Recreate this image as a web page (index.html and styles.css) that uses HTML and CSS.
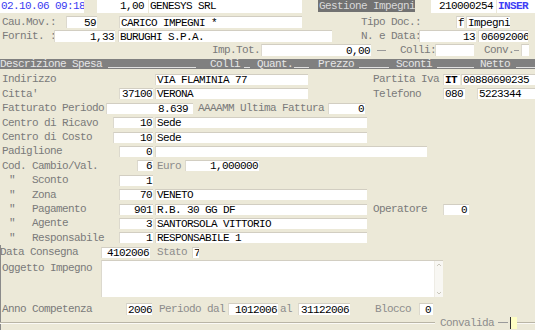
FILE: index.html
```html
<!DOCTYPE html>
<html>
<head>
<meta charset="utf-8">
<link rel="stylesheet" href="styles.css">
</head>
<body>
<div class="screen">
  <div class="trow t1">
    <div class="fld date w84">02.10.06 09:18</div>
    <div class="fld r pr4 w51 ml13">1,00</div>
    <div class="fld w153 ml1">GENESYS SRL</div>
    <div class="title w97 ml16">Gestione Impegni</div>
    <div class="fld r pr3 w65 ml16">210000254</div>
    <div class="fld mode w38 ml1">INSER</div>
  </div>
  <div class="trow">
    <div class="lbl w66">Cau.Mov.:</div>
    <div class="fld r w31">59</div>
    <div class="fld w183 ml22">CARICO IMPEGNI *</div>
    <div class="lbl nopad w95 ml59">Tipo Doc.:</div>
    <div class="fld w8">f</div>
    <div class="fld w44 ml2">Impegni</div>
  </div>
  <div class="trow">
    <div class="lbl w54">Fornit. :</div>
    <div class="fld r w61">1,33</div>
    <div class="fld w214 ml3">BURUGHI S.P.A.</div>
    <div class="lbl nopad w58 ml29">N. e Data:</div>
    <div class="fld r w57">13</div>
    <div class="fld pl2 w50 ml2">06092006</div>
  </div>
  <div class="trow">
    <div class="lbl w51 ml210">Imp.Tot.:</div>
    <div class="fld r w110">0,00</div>
    <div class="dash w9 ml6"></div>
    <div class="lbl nopad w35 ml14">Colli:</div>
    <div class="fld w39">&nbsp;</div>
    <div class="lbl nopad w29 ml10">Conv.</div>
    <div class="dash w5 ml1"></div>
    <div class="fld w8 ml2">&nbsp;</div>
  </div>

  <div class="hbar">
    <span class="htxt w108">Descrizione Spesa</span>
    <span class="uline w88"></span>
    <span class="htxt w30 ml14">Colli</span>
    <span class="uline w6 ml4"></span>
    <span class="htxt w36 ml7">Quant.</span>
    <span class="uline w15 ml1"></span>
    <span class="htxt w36 ml9">Prezzo</span>
    <span class="uline w30 ml5"></span>
    <span class="htxt w36 ml7">Sconti</span>
    <span class="uline w37 ml5"></span>
    <span class="htxt w30 ml6">Netto</span>
    <span class="uline grow ml6"></span>
  </div>

  <div class="body">
    <div class="frow">
      <div class="c1"><span class="lbl">Indirizzo</span></div>
      <div class="c2"><div class="fld w153">VIA FLAMINIA 77</div></div>
      <div class="c3 lbl">Partita Iva</div>
      <div class="c4"><div class="fld bold w17">IT</div><div class="fld w74 ml1">00880690235</div></div>
    </div>
    <div class="frow">
      <div class="c1"><span class="lbl">Citta'</span><div class="fld r w34">37100</div></div>
      <div class="c2"><div class="fld w153">VERONA</div></div>
      <div class="c3 lbl">Telefono</div>
      <div class="c4"><div class="fld w22">080</div><div class="fld w58 ml12">5223344</div></div>
    </div>
    <div class="frow">
      <div class="lbl w106">Fatturato Periodo</div>
      <div class="fld r pr5 w87">8.639</div>
      <div class="lbl w132 ml3">AAAAMM Ultima Fattura</div>
      <div class="fld r w37">0</div>
    </div>
    <div class="frow">
      <div class="c1"><span class="lbl">Centro di Ricavo</span><div class="fld r w40">10</div></div>
      <div class="c2"><div class="fld w212">Sede</div></div>
    </div>
    <div class="frow">
      <div class="c1"><span class="lbl">Centro di Costo</span><div class="fld r w40">10</div></div>
      <div class="c2"><div class="fld w212">Sede</div></div>
    </div>
    <div class="frow">
      <div class="c1"><span class="lbl">Padiglione</span><div class="fld r w34">0</div></div>
      <div class="c2"><div class="fld w272">&nbsp;</div></div>
    </div>
    <div class="frow">
      <div class="c1"><span class="lbl">Cod. Cambio/Val.</span><div class="fld r w16">6</div></div>
      <div class="c2"><span class="lbl lite w30">Euro</span><div class="fld r w74">1,000000</div></div>
    </div>
    <div class="frow">
      <div class="c1"><span class="lbl"><span class="q">"</span>Sconto</span><div class="fld r w34">1</div></div>
    </div>
    <div class="frow">
      <div class="c1"><span class="lbl"><span class="q">"</span>Zona</span><div class="fld r w34">70</div></div>
      <div class="c2"><div class="fld w212">VENETO</div></div>
    </div>
    <div class="frow">
      <div class="c1"><span class="lbl"><span class="q">"</span>Pagamento</span><div class="fld r w34">901</div></div>
      <div class="c2"><div class="fld w212">R.B. 30 GG DF</div></div>
      <div class="c3 lbl">Operatore</div>
      <div class="c4"><div class="fld r pr2 w26">0</div></div>
    </div>
    <div class="frow">
      <div class="c1"><span class="lbl"><span class="q">"</span>Agente</span><div class="fld r w34">3</div></div>
      <div class="c2"><div class="fld w212">SANTORSOLA VITTORIO</div></div>
    </div>
    <div class="frow">
      <div class="c1"><span class="lbl"><span class="q">"</span>Responsabile</span><div class="fld r w34">1</div></div>
      <div class="c2"><div class="fld w212">RESPONSABILE 1</div></div>
    </div>
    <div class="lower">
      <div class="frow">
        <div class="c1"><span class="lbl nopad">Data Consegna</span><div class="fld r w49 mr3">4102006</div></div>
        <div class="c2"><span class="lbl lite w37">Stato</span><div class="fld w7">7</div></div>
      </div>
      <div class="orow">
        <div class="lbl otl w101">Oggetto Impegno</div>
        <div class="tarea">
          <div class="sbar">
            <div class="sbtn"><svg width="8" height="8" viewBox="0 0 8 8"><path d="M2 5 L4 3 L6 5" fill="none" stroke="#c9c6bb" stroke-width="1"/></svg></div>
            <div class="strack"></div>
            <div class="sbtn"><svg width="8" height="8" viewBox="0 0 8 8"><path d="M2 3 L4 5 L6 3" fill="none" stroke="#c9c6bb" stroke-width="1"/></svg></div>
          </div>
        </div>
      </div>
      <div class="frow arow">
        <div class="c1"><span class="lbl">Anno Competenza</span><div class="fld h12 r w26 mr1">2006</div></div>
        <div class="lbl lite w71 ml4">Periodo dal</div>
        <div class="fld h12 r w50">1012006</div>
        <div class="lbl lite w20 pl2">al</div>
        <div class="fld h12 pl2 w52">31122006</div>
        <div class="lbl lite w46 ml23">Blocco</div>
        <div class="fld h12 r pr2 w14">0</div>
      </div>
      <div class="brow">
        <div class="groove w435"></div>
        <div class="lbl lite ml3 w54">Convalida</div>
        <div class="dash w10 ml6"></div>
        <div class="ybox ml2"></div>
        <div class="groove grow"></div>
      </div>
    </div>
  </div>
</div>
</body>
</html>
```

FILE: styles.css
```css
html, body {
  margin: 0;
  padding: 0;
  background: #ECE9D8;
}
.screen {
  width: 535px;
  height: 330px;
  overflow: hidden;
  background: #ECE9D8;
  font-family: "Liberation Mono", "Courier New", monospace;
  font-size: 11px;
  letter-spacing: -0.6px;
  color: #000;
}
.trow {
  display: flex;
  align-items: center;
  height: 14px;
}
.trow.t1 {
  height: 15px;
  align-items: flex-start;
}
.trow .fld { height: 12px; line-height: 12px; }
.t1 .fld { height: 13px; line-height: 13px; }

.fld {
  background: #fff;
  height: 11px;
  line-height: 11px;
  box-sizing: border-box;
  border-top: 1px solid #d2cec2;
  border-left: 1px solid #dcd9ce;
  padding: 0 1px;
  white-space: nowrap;
  overflow: hidden;
  flex: none;
}
.fld.h12 { height: 12px; line-height: 12px; }
.t1 .fld { border: none; }
.r { text-align: right; }
.bold { font-weight: bold; }
.date { color: #3a3af2; padding-left: 1px; }
.mode { color: #3f3ff5; font-weight: bold; padding-left: 1px; }
.title {
  background: #727272;
  color: #d9d9d9;
  height: 12px;
  line-height: 12px;
  padding-left: 1px;
  box-sizing: border-box;
  white-space: nowrap;
  flex: none;
}
.lbl {
  color: #7a7a7a;
  white-space: nowrap;
  padding-left: 2px;
  box-sizing: border-box;
  flex: none;
}
.lbl.nopad { padding-left: 0; }
.lbl.lite { color: #8c8c8c; }
.q {
  display: inline-block;
  width: 30px;
  text-indent: 7px;
}
.dash {
  height: 0;
  border-top: 1px solid #9a9a9a;
  flex: none;
}

.hbar {
  display: flex;
  align-items: center;
  height: 10px;
  margin-top: 2px;
  background: #808080;
  color: #e6e6e6;
  line-height: 10px;
}
.htxt { white-space: nowrap; flex: none; }
.uline {
  align-self: flex-end;
  margin-bottom: 1px;
  height: 1px;
  background: #e0e0e0;
  flex: none;
}
.grow { flex: 1 1 auto; }

.body { margin-top: 3.3px; }
.frow {
  display: flex;
  align-items: center;
  height: 14.4px;
}
.c1 {
  width: 153px;
  flex: none;
  display: flex;
  justify-content: space-between;
  align-items: center;
}
.c2 {
  width: 218px;
  margin-left: 2px;
  flex: none;
  display: flex;
  align-items: center;
}
.c3 { width: 70px; padding-left: 0; }
.c4 { flex: 1; display: flex; align-items: center; }

.lower { box-shadow: inset 1px 0 #8a8a8a; }
.orow {
  display: flex;
  height: 37px;
  margin-top: 0.5px;
}
.otl { padding-top: 2px; }
.tarea {
  width: 342px;
  height: 37px;
  background: #fff;
  box-sizing: border-box;
  border-top: 1px solid #d2cec2;
  border-left: 1px solid #dcd9ce;
  display: flex;
  justify-content: flex-end;
}
.sbar {
  width: 8px;
  display: flex;
  flex-direction: column;
  background: #f8f7f3;
  border-left: 1px solid #eeece5;
}
.sbtn { height: 8px; display: flex; }
.strack { flex: 1; }
.arow { margin-top: 4.5px; }
.brow {
  display: flex;
  align-items: center;
  height: 14px;
}
.groove {
  height: 0;
  border-top: 1px solid #b9b5a6;
  border-bottom: 1px solid #fbfaf6;
  flex: none;
}
.groove.grow { flex: 1 1 auto; }
.ybox {
  width: 7px;
  height: 12px;
  background: #ffffc4;
  border-left: 1px solid #333;
  box-sizing: border-box;
  flex: none;
}

.pl2 { padding-left: 2px; }
.pr2 { padding-right: 2px; }
.pr3 { padding-right: 3px; }
.pr4 { padding-right: 4px; }
.pr5 { padding-right: 5px; }
.mr1 { margin-right: 1px; }
.mr3 { margin-right: 3px; }
.ml1 { margin-left: 1px; }
.ml2 { margin-left: 2px; }
.ml3 { margin-left: 3px; }
.ml4 { margin-left: 4px; }
.ml5 { margin-left: 5px; }
.ml6 { margin-left: 6px; }
.ml7 { margin-left: 7px; }
.ml9 { margin-left: 9px; }
.ml10 { margin-left: 10px; }
.ml12 { margin-left: 12px; }
.ml13 { margin-left: 13px; }
.ml14 { margin-left: 14px; }
.ml16 { margin-left: 16px; }
.ml22 { margin-left: 22px; }
.ml23 { margin-left: 23px; }
.ml29 { margin-left: 29px; }
.ml59 { margin-left: 59px; }
.ml210 { margin-left: 210px; }
.w5 { width: 5px; }
.w6 { width: 6px; }
.w7 { width: 7px; }
.w8 { width: 8px; }
.w9 { width: 9px; }
.w10 { width: 10px; }
.w14 { width: 14px; }
.w15 { width: 15px; }
.w16 { width: 16px; }
.w17 { width: 17px; }
.w20 { width: 20px; }
.w22 { width: 22px; }
.w26 { width: 26px; }
.w29 { width: 29px; }
.w30 { width: 30px; }
.w31 { width: 31px; }
.w34 { width: 34px; }
.w35 { width: 35px; }
.w36 { width: 36px; }
.w37 { width: 37px; }
.w38 { width: 38px; }
.w39 { width: 39px; }
.w40 { width: 40px; }
.w44 { width: 44px; }
.w46 { width: 46px; }
.w49 { width: 49px; }
.w50 { width: 50px; }
.w51 { width: 51px; }
.w52 { width: 52px; }
.w54 { width: 54px; }
.w57 { width: 57px; }
.w58 { width: 58px; }
.w61 { width: 61px; }
.w65 { width: 65px; }
.w66 { width: 66px; }
.w71 { width: 71px; }
.w74 { width: 74px; }
.w84 { width: 84px; }
.w87 { width: 87px; }
.w88 { width: 88px; }
.w95 { width: 95px; }
.w97 { width: 97px; }
.w101 { width: 101px; }
.w106 { width: 106px; }
.w108 { width: 108px; }
.w110 { width: 110px; }
.w132 { width: 132px; }
.w153 { width: 153px; }
.w183 { width: 183px; }
.w212 { width: 212px; }
.w214 { width: 214px; }
.w272 { width: 272px; }
.w435 { width: 435px; }
```
